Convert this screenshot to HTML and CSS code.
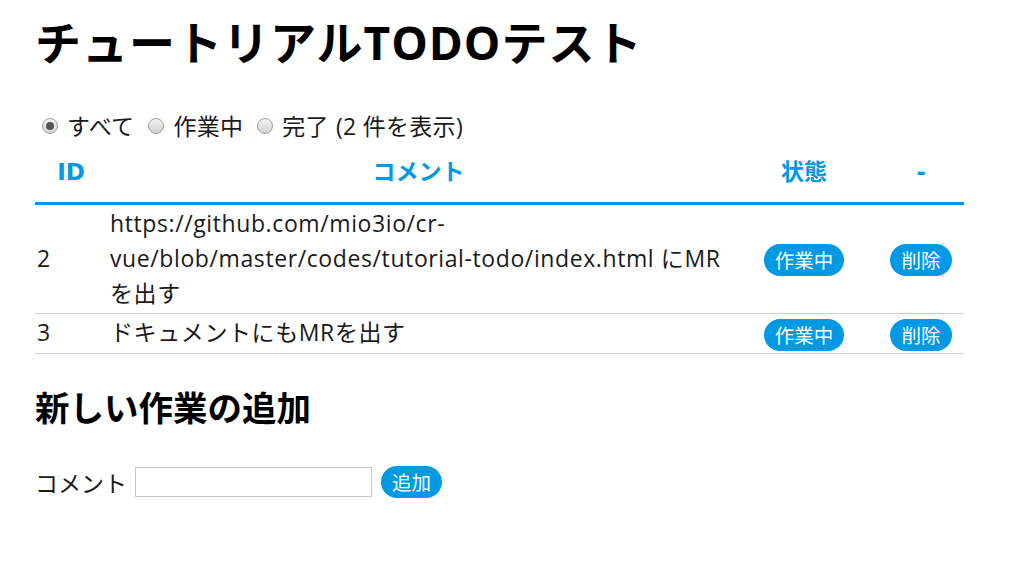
FILE: index.html
```html
<!DOCTYPE html>
<html lang="ja">
<head>
<meta charset="utf-8">
<title>チュートリアルTODOテスト</title>
<link rel="stylesheet" href="styles.css">
</head>
<body>
<div class="app">
  <h1 class="title">チュートリアルTODOテスト</h1>
  <div class="filter">
    <label class="opt"><span class="radio checked"></span>すべて</label>
    <label class="opt"><span class="radio"></span>作業中</label>
    <label class="opt"><span class="radio"></span>完了</label>
    <span class="count">(2 件を表示)</span>
  </div>
  <table class="todos">
    <thead>
      <tr>
        <th class="c-id">ID</th>
        <th class="c-comment">コメント</th>
        <th class="c-state">状態</th>
        <th class="c-button">-</th>
      </tr>
    </thead>
    <tbody>
      <tr>
        <td class="c-id">2</td>
        <td class="c-comment">https://github.com/mio3io/cr-vue/blob/master/codes/tutorial-todo/index.html にMRを出す</td>
        <td class="c-state"><button class="btn">作業中</button></td>
        <td class="c-button"><button class="btn">削除</button></td>
      </tr>
      <tr>
        <td class="c-id">3</td>
        <td class="c-comment">ドキュメントにもMRを出す</td>
        <td class="c-state"><button class="btn">作業中</button></td>
        <td class="c-button"><button class="btn">削除</button></td>
      </tr>
    </tbody>
  </table>
  <h2 class="subtitle">新しい作業の追加</h2>
  <form class="add-form">
    <span class="label">コメント</span>
    <input class="text" type="text">
    <button class="btn" type="button">追加</button>
  </form>
</div>
</body>
</html>
```

FILE: styles.css
```css
* { box-sizing: border-box; }
html, body {
  margin: 0;
  background: #fff;
}
body {
  font-family: "Open Sans", "Noto Sans CJK JP", sans-serif;
  font-size: 23px;
  color: #1a1a1a;
}
.app {
  width: 964px;
  padding-left: 35px;
}
.title {
  margin: 15px 0 0;
  font-size: 46px;
  line-height: 55px;
  font-weight: 700;
  letter-spacing: 1px;
  color: #000;
}
.filter {
  margin-top: 40px;
  height: 32px;
  display: flex;
  align-items: center;
  line-height: 32px;
  letter-spacing: 0.3px;
}
.opt {
  display: flex;
  align-items: center;
  margin-right: 7px;
}
.radio {
  flex: none;
  width: 16px;
  height: 16px;
  border-radius: 50%;
  border: 1px solid #9f9f9f;
  background: linear-gradient(#f4f4f4, #d2d2d2);
  margin: 0 9px 0 7px;
  display: flex;
  align-items: center;
  justify-content: center;
}
.radio.checked::after {
  content: "";
  width: 8px;
  height: 8px;
  border-radius: 50%;
  background: #555;
}
.todos {
  width: 929px;
  border-collapse: collapse;
  table-layout: fixed;
}
.todos th {
  font-family: "DejaVu Sans", "Noto Sans CJK JP", sans-serif;
  color: #0099e4;
  font-weight: 700;
  height: 60px;
  line-height: 60px;
  padding: 0 2px;
  text-align: center;
  border-bottom: 3px solid #0099e4;
}
.todos th.c-id { width: 72px; }
.todos th.c-comment { width: 623px; }
.todos th.c-state { width: 148px; }
.todos th.c-button { width: 86px; }
.todos td {
  line-height: 35px;
  padding: 1px 2px 2px;
  border-bottom: 1px solid #cfcfcf;
  vertical-align: middle;
}
.todos td.c-comment {
  padding-left: 3px;
  padding-right: 0;
  letter-spacing: 0.6px;
}
.todos td.c-state,
.todos td.c-button { text-align: center; }
.btn {
  font-family: "Noto Sans CJK JP", sans-serif;
  font-size: 19.5px;
  height: 32px;
  line-height: 32px;
  padding: 0 11px;
  border: none;
  border-radius: 16px;
  background: #0099e4;
  color: #fff;
  vertical-align: middle;
  cursor: pointer;
}
.subtitle {
  margin: 33px 0 0;
  font-size: 34.5px;
  line-height: 42px;
  font-weight: 700;
  color: #000;
}
.add-form {
  margin-top: 36px;
  display: flex;
  align-items: center;
}
.label { margin-right: 8px; }
.text {
  width: 237px;
  height: 30px;
  border: 1px solid #c8c8c8;
  margin: 0 9px 0 0;
  padding: 0 4px;
  font-size: 19px;
}
```
